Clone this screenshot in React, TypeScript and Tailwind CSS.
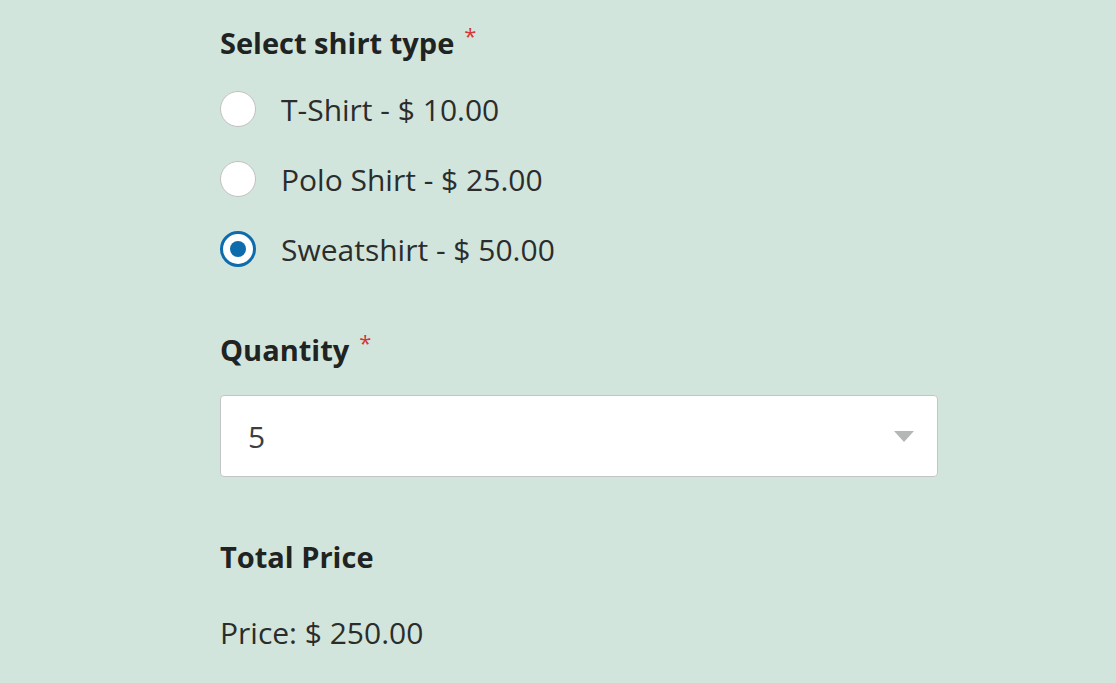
import React from 'react'

const options = [
  { label: 'T-Shirt - $ 10.00', checked: false },
  { label: 'Polo Shirt - $ 25.00', checked: false },
  { label: 'Sweatshirt - $ 50.00', checked: true },
]

function Radio({ checked }: { checked: boolean }) {
  if (checked) {
    return (
      <span className="flex h-[36px] w-[36px] items-center justify-center rounded-full border-[3px] border-[#0e6cad] bg-white">
        <span className="h-[16px] w-[16px] rounded-full bg-[#0e6cad]" />
      </span>
    )
  }
  return <span className="h-[36px] w-[36px] rounded-full border border-[#c0c0c0] bg-white" />
}

function Label({ text, required }: { text: string; required?: boolean }) {
  return (
    <div className="flex h-[38px] items-center text-[29px] font-bold text-[#1f2321]">
      {text}
      {required && (
        <span className="ml-[10px] self-start text-[22px] leading-[22px] font-normal text-[#d63638]">*</span>
      )}
    </div>
  )
}

export default function App() {
  return (
    <div
      className="min-h-[683px] w-full bg-[#d2e5dd] pt-[24px]"
      style={{ fontFamily: '"Open Sans", "Noto Sans", sans-serif' }}
    >
      <div className="ml-[220px] w-[718px]">
        {/* shirt type */}
        <Label text="Select shirt type" required />
        <div className="mt-[12px] flex flex-col">
          {options.map((o) => (
            <label key={o.label} className="flex h-[70px] items-center">
              <Radio checked={o.checked} />
              <span className="ml-[25px] text-[30px] text-[#2b2d2c]">{o.label}</span>
            </label>
          ))}
        </div>

        {/* quantity */}
        <div className="mt-[47px]">
          <Label text="Quantity" required />
        </div>
        <div className="mt-[26px] flex h-[82px] items-center justify-between rounded-[4px] border border-[#c4c6c5] bg-white pl-[27px] pr-[23px]">
          <span className="text-[30px] text-[#3c3f3e]">5</span>
          <svg width="20" height="11" viewBox="0 0 20 11">
            <path d="M0 0 L20 0 L10 11 Z" fill="#b5b7b6" />
          </svg>
        </div>

        {/* total */}
        <div className="mt-[61px]">
          <Label text="Total Price" />
        </div>
        <div className="mt-[37px] flex h-[38px] items-center text-[30px] text-[#2b2d2c]">Price: $ 250.00</div>
      </div>
    </div>
  )
}
